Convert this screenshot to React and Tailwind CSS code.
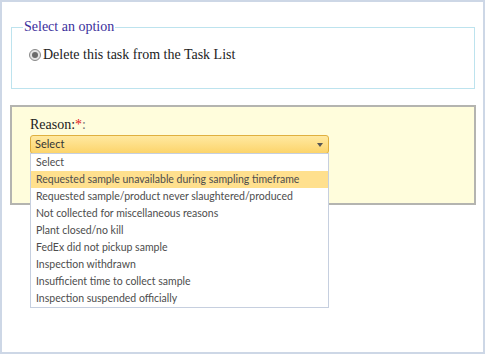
const reasons = [
  "Select",
  "Requested sample unavailable during sampling timeframe",
  "Requested sample/product never slaughtered/produced",
  "Not collected for miscellaneous reasons",
  "Plant closed/no kill",
  "FedEx did not pickup sample",
  "Inspection withdrawn",
  "Insufficient time to collect sample",
  "Inspection suspended officially",
];

const App = () => {
  return (
    <div className="w-[485px] h-[354px] bg-white border-2 border-[#cdd7e6] pt-[17px] pl-[8px] pr-[7px] font-['Liberation_Serif',serif]">
      <fieldset className="ml-[1px] mr-[1px] h-[70px] border border-[#bde3ee] px-[12px]">
        <legend className="px-[1px] -ml-[1px] text-[14px] text-[#3b2f9c] leading-[16px]">
          Select an option
        </legend>
        <label className="flex items-center gap-[2px] mt-[9px] ml-[5px] text-[14px] text-[#222]">
          <span className="w-[12px] h-[12px] rounded-full border border-[#8a8a8a] bg-[#e4e4e4] flex items-center justify-center">
            <span className="w-[6px] h-[6px] rounded-full bg-[#6a6a6a]" />
          </span>
          Delete this task from the Task List
        </label>
      </fieldset>

      <div className="mt-[16px] h-[100px] bg-[#fffddc] border-2 border-[#b4b4b0] pl-[18px] pt-[10px]">
        <div className="text-[14px] leading-[16px] text-[#222]">
          Reason:<span className="text-[#e02020]">*</span>
          <span className="text-[#777]">:</span>
        </div>
        <div className="relative mt-[2px] w-[299px]">
          <div className="h-[19px] rounded-[3px] border border-[#e0b040] bg-gradient-to-b from-[#ffe9a0] to-[#fcd46a] flex items-center justify-between pl-[4px] pr-[5px] font-['Lato',sans-serif] text-[11px] text-[#333]">
            <span>Select</span>
            <span className="w-0 h-0 border-l-[3px] border-r-[3px] border-t-[4px] border-l-transparent border-r-transparent border-t-[#555]" />
          </div>
          <ul className="absolute left-0 top-[18px] w-[299px] bg-white border border-[#c6cfdf] font-['Lato',sans-serif] text-[10.5px] text-[#4d4d4d]">
            {reasons.map((r, i) => (
              <li
                key={r}
                className={
                  "h-[17px] leading-[17px] pl-[5px] whitespace-nowrap " +
                  (i === 1 ? "bg-[#ffe08e]" : "")
                }
              >
                {r}
              </li>
            ))}
          </ul>
        </div>
      </div>
    </div>
  );
};

export default App;
